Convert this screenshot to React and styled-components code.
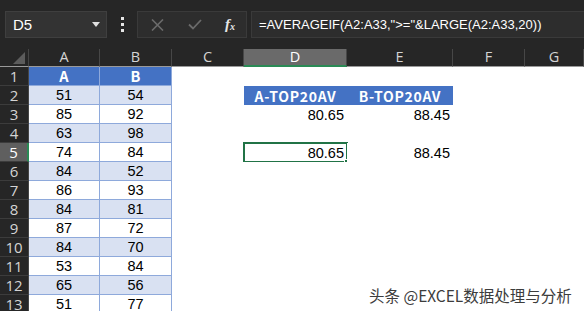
import React from 'react';
import styled, { createGlobalStyle } from 'styled-components';

const GlobalStyle = createGlobalStyle`
    body {
        margin: 0;
        background: #FFFFFF;
    }
`

const COLS = ['A', 'B', 'C', 'D', 'E', 'F', 'G'];
const A_VALUES = [51, 85, 63, 74, 84, 86, 84, 87, 84, 53, 65, 51];
const B_VALUES = [54, 92, 98, 84, 52, 93, 81, 72, 70, 84, 56, 77];

function cellsFor(row) {
    const cells = {};
    if (row === 1) {
        cells.A = { text: 'A', kind: 'head' };
        cells.B = { text: 'B', kind: 'head' };
    } else {
        const band = row % 2 === 0 ? 'band' : 'plain';
        cells.A = { text: A_VALUES[row - 2], kind: band };
        cells.B = { text: B_VALUES[row - 2], kind: band };
    }
    if (row === 2) {
        cells.D = { text: 'A-TOP20AV', kind: 'title' };
        cells.E = { text: 'B-TOP20AV', kind: 'title' };
    }
    if (row === 3 || row === 5) {
        cells.D = { text: '80.65', kind: 'num' };
        cells.E = { text: '88.45', kind: 'num' };
    }
    return cells;
}

export default function App() {
    const rows = Array.from({ length: 13 }, (_, i) => i + 1);

    return (
        <Page>
            <GlobalStyle />
            <Toolbar>
                <NameBox>
                    <span>D5</span>
                    <Caret />
                </NameBox>
                <Dots>
                    <i /><i /><i />
                </Dots>
                <FuncBox>
                    <svg width="13" height="12" viewBox="0 0 13 12">
                        <path d="M1 0.5 L12 11.5 M12 0.5 L1 11.5" stroke="#6b6b6b" strokeWidth="1.6" fill="none" />
                    </svg>
                    <svg width="14" height="11" viewBox="0 0 14 11">
                        <path d="M1 5.5 L5 9.5 L13 1" stroke="#6b6b6b" strokeWidth="1.8" fill="none" />
                    </svg>
                    <Fx>f<sub>x</sub></Fx>
                </FuncBox>
                <FormulaBar>=AVERAGEIF(A2:A33,"&gt;="&amp;LARGE(A2:A33,20))</FormulaBar>
            </Toolbar>
            <Sheet>
                <Corner>
                    <svg width="12" height="12" viewBox="0 0 12 12">
                        <path d="M12 0 L12 12 L0 12 Z" fill="#5c5c5c" />
                    </svg>
                </Corner>
                {COLS.map((c) => (
                    <ColHead key={c} $active={c === 'D'}>{c}</ColHead>
                ))}
                {rows.map((r) => {
                    const cells = cellsFor(r);
                    return (
                        <React.Fragment key={r}>
                            <RowHead $active={r === 5}>{r}</RowHead>
                            {COLS.map((c) => {
                                const cell = cells[c];
                                return (
                                    <Cell
                                        key={c}
                                        $kind={cell ? cell.kind : 'empty'}
                                        $selected={r === 5 && c === 'D'}
                                    >
                                        {cell ? cell.text : ''}
                                    </Cell>
                                );
                            })}
                        </React.Fragment>
                    );
                })}
            </Sheet>
            <Watermark>头条 @EXCEL数据处理与分析</Watermark>
        </Page>
    )
}

const Page = styled.div`
    position: relative;
    width: 584px;
    height: 311px;
    overflow: hidden;
    background: #FFFFFF;
    font-family: "Liberation Sans", Arial, sans-serif;
`
const Toolbar = styled.div`
    height: 49px;
    box-sizing: border-box;
    padding: 11px 0 0 5px;
    background: #262626;
    display: flex;
    align-items: flex-start;
`
const NameBox = styled.div`
    width: 102px;
    height: 27px;
    box-sizing: border-box;
    background: #333333;
    border: 1px solid #3f3f3f;
    display: flex;
    align-items: center;
    justify-content: space-between;
    padding: 0 6px 0 7px;
    color: #FFFFFF;
    font-size: 15px;
`
const Caret = styled.div`
    width: 0;
    height: 0;
    border-left: 4px solid transparent;
    border-right: 4px solid transparent;
    border-top: 5px solid #E0E0E0;
`
const Dots = styled.div`
    width: 30px;
    height: 27px;
    display: flex;
    flex-direction: column;
    align-items: center;
    justify-content: center;
    gap: 3px;
    i {
        width: 3px;
        height: 3px;
        background: #E6E6E6;
    }
`
const FuncBox = styled.div`
    width: 110px;
    height: 27px;
    box-sizing: border-box;
    background: #2d2d2d;
    border: 1px solid #3a3a3a;
    display: flex;
    align-items: center;
    justify-content: space-between;
    padding: 0 11px 0 13px;
`
const Fx = styled.span`
    font-family: "Liberation Serif", serif;
    font-style: italic;
    font-weight: bold;
    font-size: 15px;
    color: #E6E6E6;
    sub {
        font-size: 10px;
        vertical-align: -1px;
    }
`
const FormulaBar = styled.div`
    margin-left: 4px;
    flex: 1;
    height: 27px;
    box-sizing: border-box;
    background: #2d2d2d;
    border: 1px solid #3a3a3a;
    border-right: none;
    padding-left: 7px;
    display: flex;
    align-items: center;
    color: #FFFFFF;
    font-size: 13px;
    white-space: nowrap;
`
const Sheet = styled.div`
    display: grid;
    grid-template-columns: 29px 71px 72px 72px 103px 106px 72px 59px;
    grid-template-rows: 18px repeat(13, 19px);
    line-height: 1;
`
const Corner = styled.div`
    background: #262626;
    border-bottom: 1px solid #9a9a9a;
    border-right: 1px solid #454545;
    display: flex;
    align-items: flex-end;
    justify-content: flex-end;
    padding: 0 3px 2px 0;
`
const ColHead = styled.div`
    background: ${(p) => (p.$active ? '#6a6a6a' : '#262626')};
    border-right: 1px solid #474747;
    border-bottom: ${(p) => (p.$active ? '2px solid #2a8a55' : '1px solid #9a9a9a')};
    color: ${(p) => (p.$active ? '#FFFFFF' : '#d4d4d4')};
    font-family: "Open Sans", "Liberation Sans", sans-serif;
    font-size: 14.5px;
    display: flex;
    align-items: center;
    justify-content: center;
`
const RowHead = styled.div`
    background: ${(p) => (p.$active ? '#5f5f5f' : '#262626')};
    border-bottom: 1px solid #3c3c3c;
    border-right: ${(p) => (p.$active ? '2px solid #2a8a55' : '1px solid #454545')};
    color: ${(p) => (p.$active ? '#FFFFFF' : '#d4d4d4')};
    font-family: "Open Sans", "Liberation Sans", sans-serif;
    font-size: 15px;
    display: flex;
    align-items: center;
    justify-content: center;
`
const KIND_BG = {
    head: '#4472C4',
    title: '#4472C4',
    band: '#D9E1F2',
    plain: '#FFFFFF',
    num: '#FFFFFF',
    empty: '#FFFFFF',
};
const Cell = styled.div`
    position: relative;
    box-sizing: border-box;
    background: ${(p) => KIND_BG[p.$kind]};
    border-right: ${(p) => (['head', 'band', 'plain'].includes(p.$kind) ? '1px solid #8EA9DB' : 'none')};
    border-bottom: ${(p) => (['head', 'band', 'plain'].includes(p.$kind) ? '1px solid #8EA9DB' : 'none')};
    color: ${(p) => (p.$kind === 'head' || p.$kind === 'title' ? '#FFFFFF' : '#000000')};
    font-family: ${(p) => (p.$kind === 'title' || p.$kind === 'head'
        ? '"Noto Sans CJK SC", "Noto Sans", sans-serif'
        : '"Liberation Sans", Arial, sans-serif')};
    font-weight: ${(p) => (p.$kind === 'head' || p.$kind === 'title' ? 700 : 400)};
    font-size: ${(p) => (p.$kind === 'title' ? '14px' : '14.5px')};
    letter-spacing: ${(p) => (p.$kind === 'title' ? '0.7px' : '0')};
    display: flex;
    align-items: center;
    justify-content: ${(p) => (p.$kind === 'num' ? 'flex-end' : 'center')};
    padding-right: ${(p) => (p.$kind === 'num' ? '3px' : '0')};
    padding-top: 1px;
    outline: ${(p) => (p.$selected ? '2px solid #217346' : 'none')};
    outline-offset: -1px;
    &::after {
        content: '';
        display: ${(p) => (p.$selected ? 'block' : 'none')};
        position: absolute;
        right: -4px;
        bottom: -4px;
        width: 5px;
        height: 5px;
        background: #217346;
        border: 1px solid #FFFFFF;
    }
`
const Watermark = styled.div`
    position: absolute;
    left: 369px;
    top: 284px;
    font-family: "Noto Sans CJK SC", "Noto Sans", sans-serif;
    font-size: 15.5px;
    color: #3c3c3c;
    text-shadow: 1px 1px 0 rgba(255, 255, 255, 0.9), -1px -1px 0 rgba(255, 255, 255, 0.6);
    white-space: nowrap;
`
